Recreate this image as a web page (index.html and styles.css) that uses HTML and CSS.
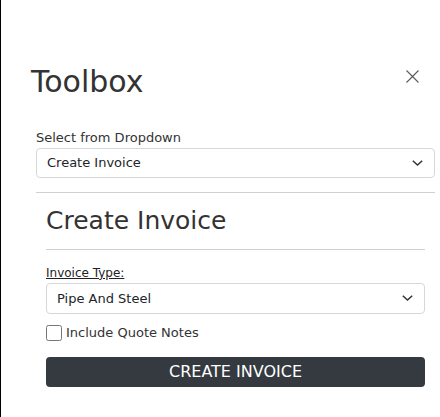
FILE: index.html
```html
<!DOCTYPE html>
<html>
<head>
<meta charset="utf-8">
<link rel="stylesheet" href="styles.css">
</head>
<body>
<div class="page">
  <div class="modal-header">
    <h2 class="modal-title">Toolbox</h2>
    <button class="close" aria-label="Close">
      <svg width="13" height="13" viewBox="0 0 13 13"><path d="M0.5 0.5 L12.5 12.5 M12.5 0.5 L0.5 12.5" stroke="#5a5a5a" stroke-width="1.1" fill="none"/></svg>
    </button>
  </div>
  <div class="modal-body">
    <label class="field-label">Select from Dropdown</label>
    <div class="select">
      <span>Create Invoice</span>
      <svg class="chev" width="11" height="6" viewBox="0 0 11 6"><path d="M0.8 0.8 L5.5 5 L10.2 0.8" stroke="#333" stroke-width="1.5" fill="none"/></svg>
    </div>
    <hr class="rule">
    <div class="section">
      <h4 class="section-title">Create Invoice</h4>
      <hr class="rule rule-inner">
      <label class="type-label">Invoice Type:</label>
      <div class="select select-2">
        <span>Pipe And Steel</span>
        <svg class="chev" width="11" height="6" viewBox="0 0 11 6"><path d="M0.8 0.8 L5.5 5 L10.2 0.8" stroke="#333" stroke-width="1.5" fill="none"/></svg>
      </div>
      <label class="check-row"><input type="checkbox" class="check"><span>Include Quote Notes</span></label>
      <button class="btn-create">CREATE INVOICE</button>
    </div>
  </div>
</div>
</body>
</html>
```

FILE: styles.css
```css
html, body {
  margin: 0;
  padding: 0;
  background: #fff;
}
body {
  font-family: "DejaVu Sans", sans-serif;
  color: #333;
}
.page {
  height: 417px;
  border-left: 1px solid #000;
  box-sizing: border-box;
  overflow: hidden;
}
.modal-header {
  display: flex;
  align-items: flex-start;
  justify-content: space-between;
  padding: 64px 21px 0 30px;
}
.modal-title {
  margin: 0;
  font-size: 30px;
  font-weight: 400;
  line-height: 36px;
  color: #333;
}
.close {
  border: 0;
  background: none;
  padding: 0;
  margin-top: 6px;
  width: 13px;
  height: 13px;
  display: block;
}
.close svg { display: block; }
.modal-body {
  padding: 28px 5px 0 35px;
}
.field-label {
  display: block;
  font-size: 13px;
  line-height: 19.5px;
  color: #333;
}
.select {
  display: flex;
  align-items: center;
  justify-content: space-between;
  height: 30px;
  box-sizing: border-box;
  border: 1px solid #d4d8dc;
  border-radius: 4px;
  padding: 0 11px 0 10px;
  font-size: 13px;
  color: #212529;
}
.chev { display: block; }
.rule {
  border: 0;
  border-top: 1px solid #d0d0d0;
  margin: 14px 0 0 0;
}
.section {
  padding: 0 10px;
}
.section-title {
  margin: 13px 0 0 0;
  font-size: 25px;
  font-weight: 400;
  line-height: 30px;
  color: #333;
}
.rule-inner {
  margin-top: 13px;
}
.type-label {
  display: block;
  margin-top: 14px;
  font-size: 12px;
  line-height: 19px;
  text-decoration: underline;
  color: #222;
}
.select-2 {
  height: 31px;
}
.check-row {
  display: flex;
  align-items: center;
  margin-top: 11px;
  font-size: 13px;
  color: #333;
  height: 16px;
}
.check {
  margin: 0 4px 0 0;
  width: 16px;
  height: 16px;
}
.btn-create {
  display: block;
  width: 100%;
  margin-top: 16px;
  height: 30px;
  border: 0;
  border-radius: 4px;
  background: #343a40;
  color: #fff;
  font-family: "DejaVu Sans", sans-serif;
  font-size: 16px;
  line-height: 30px;
  padding: 0;
}
```
